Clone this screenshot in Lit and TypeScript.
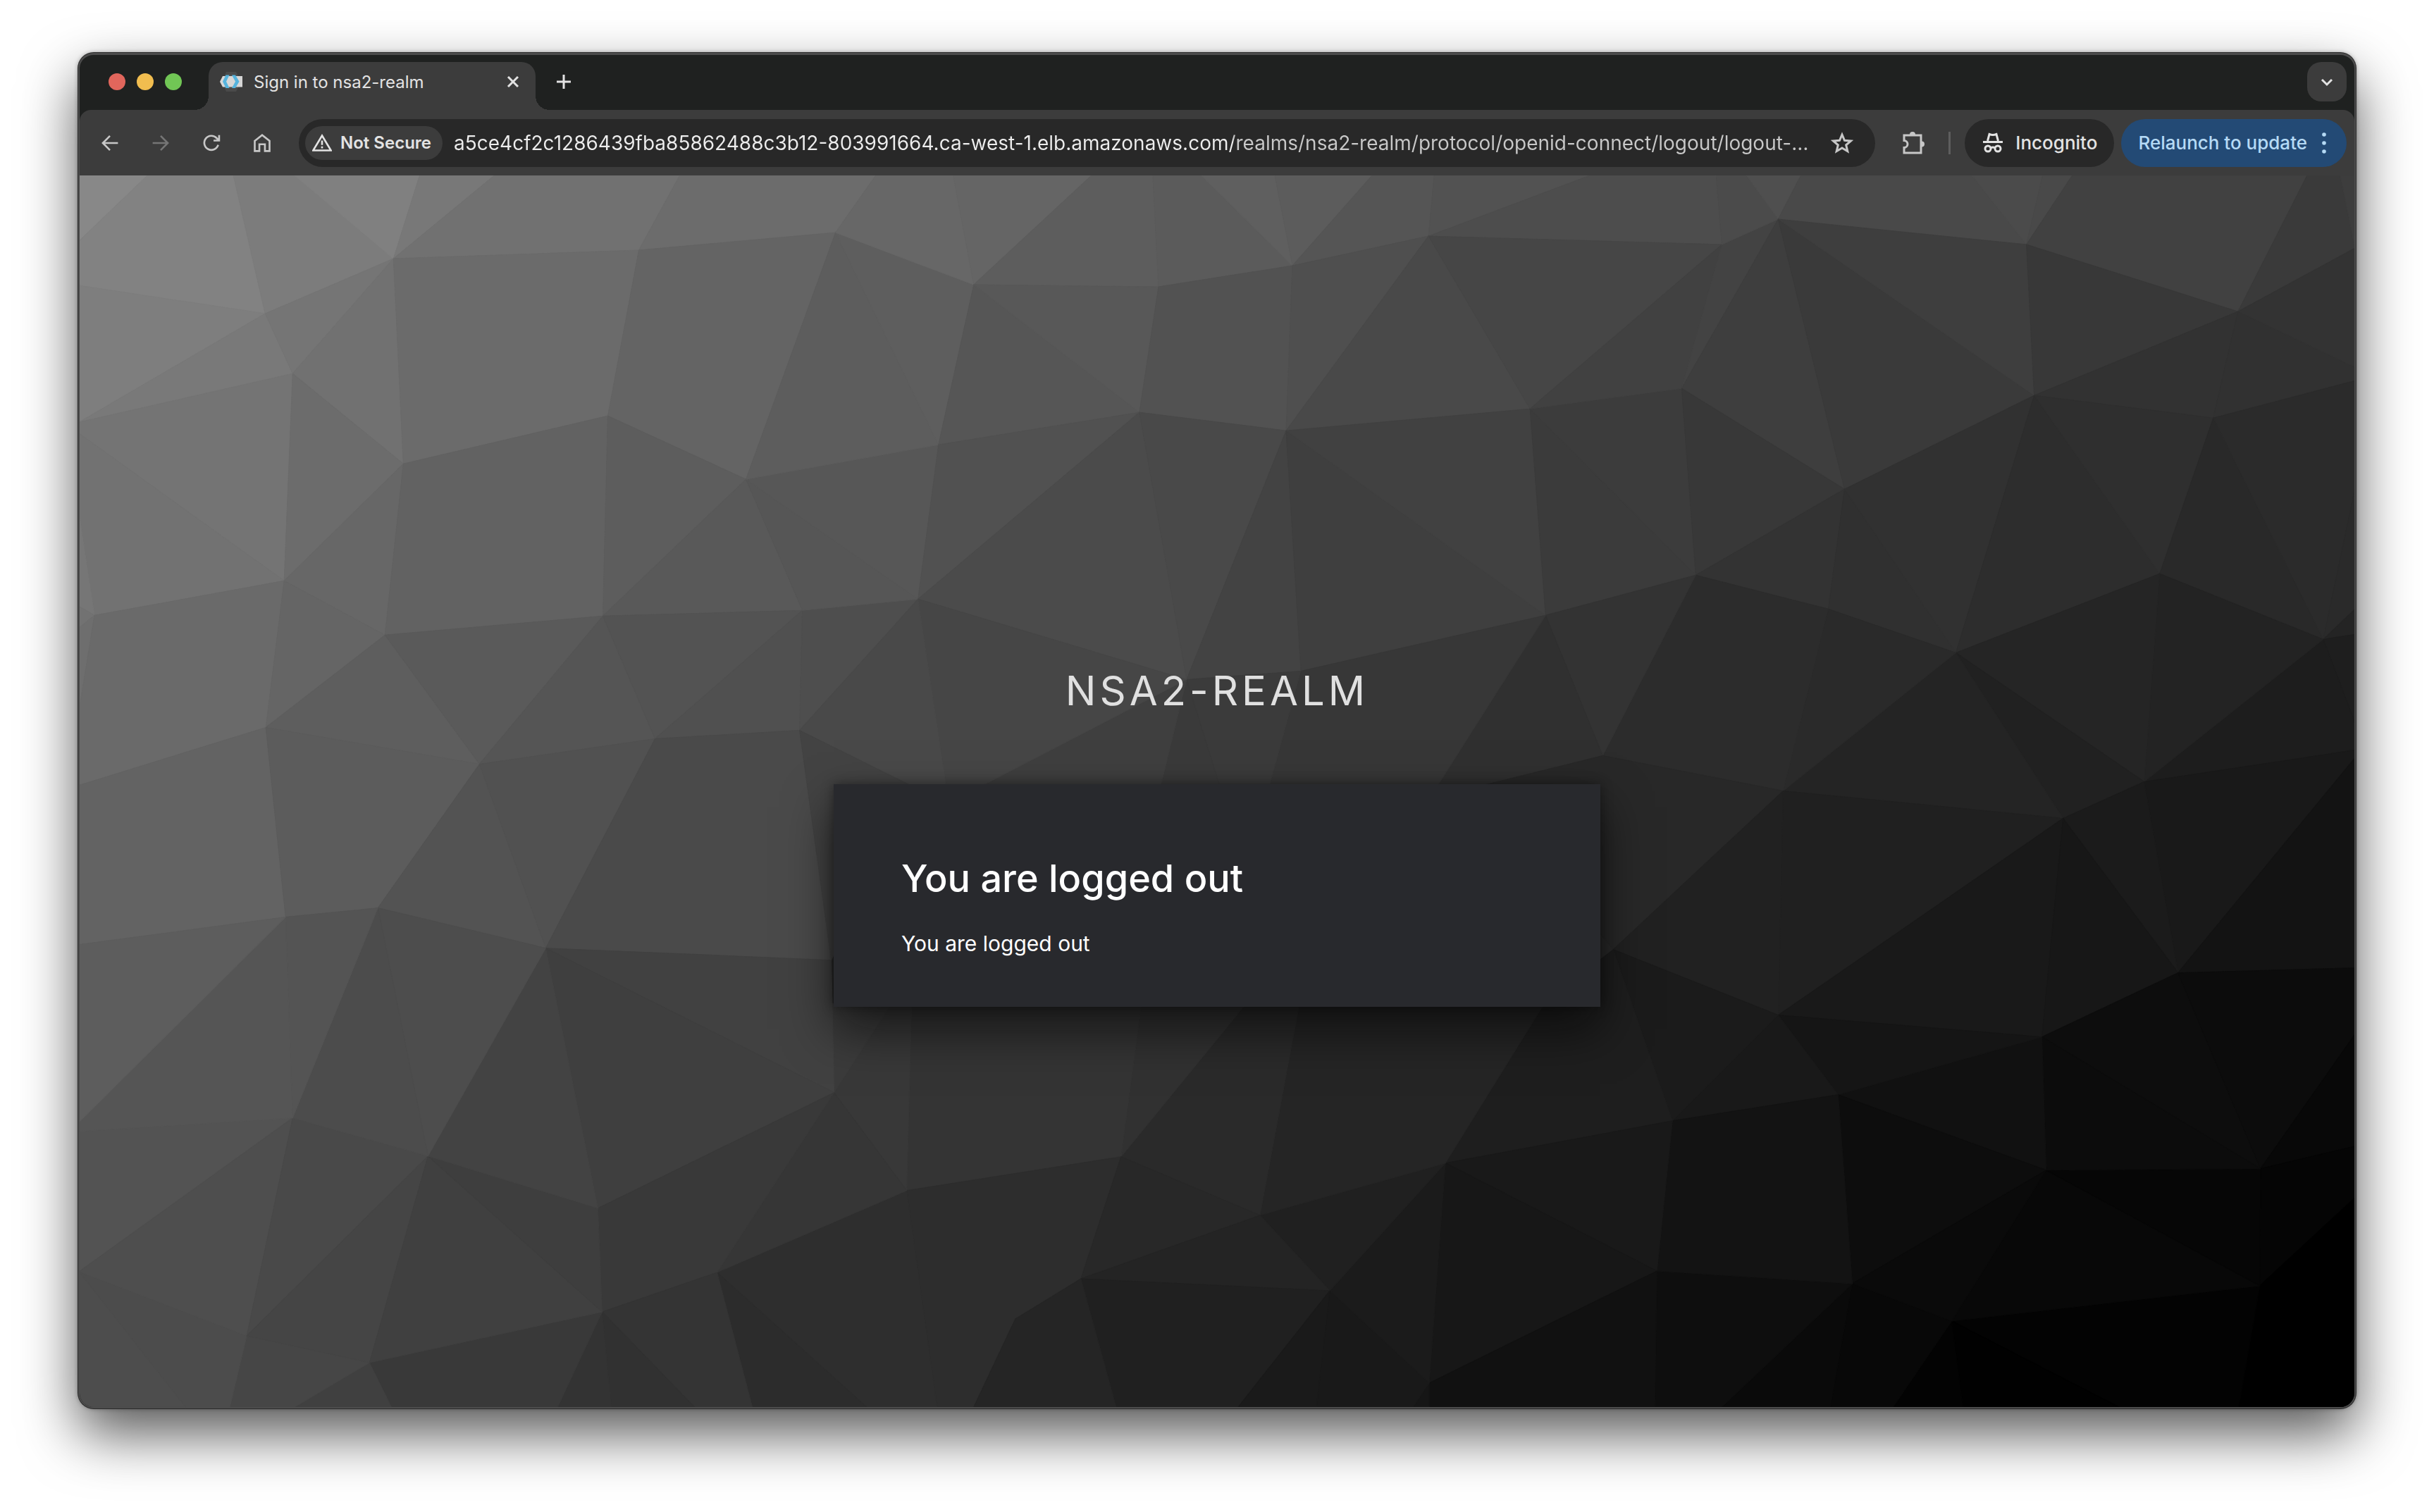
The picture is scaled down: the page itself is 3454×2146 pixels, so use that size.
import { LitElement, html, css, svg } from "lit";
import { customElement } from "lit/decorators.js";

/* Bounds of the low-poly backdrop's coordinate space. */
const LEFT = 113;
const TOP = 249;
const RIGHT = 3341;
const BOTTOM = 1996;

/* Named vertices of the backdrop mesh. */
const VERTICES: Record<string, string> = {
  A1: "377,445", A2: "559,367", A3: "416,530", A4: "573,658", A5: "907,355",
  A6: "863,590", A7: "1186,330", A8: "1059,680", A9: "135,873", A10: "404,824",
  A11: "547,901", A12: "378,1032", A13: "856,874", A14: "681,1084", A15: "930,1048",
  A16: "1139,866", A17: "1135,1036",
  B1: "1382,404", B2: "1644,407", B3: "1834,377", B4: "2027,335", B5: "1332,631",
  B6: "1617,585", B7: "1825,611", B8: "2171,580", B9: "1303,850", B10: "1684,964",
  B11: "1846,952", B12: "2193,873",
  C1: "2443,347", C2: "2523,311", C3: "2875,347", C4: "3175,442", C5: "2386,551",
  C6: "2617,694", C7: "2886,561", C8: "3140,593", C9: "2406,816", C10: "2594,864",
  C11: "2775,926", C12: "3064,814", C13: "3296,907", C14: "2274,1072", C15: "2530,1122",
  C16: "3042,1109",
  D1: "2927,1161", D2: "3090,1380", D3: "2289,1347", D4: "2523,1440", D5: "2897,1471",
  D6: "2608,1553", D7: "2373,1590", D8: "2903,1660", D9: "3207,1658", D10: "2351,1803",
  D11: "2628,1821", D12: "3206,1824", D13: "2769,1874",
  E1: "1184,1550", E2: "1287,1689", E3: "1591,1641", E4: "1788,1724", E5: "1534,1814",
  E6: "1441,1871", E7: "1887,1831", E8: "2051,1650", E9: "2028,1962",
  F1: "406,1301", F2: "537,1288", F3: "775,1345", F4: "416,1586", F5: "608,1640",
  F6: "849,1714", F8: "855,1861", F9: "1018,1805", F10: "351,1895", F11: "525,1933",
  G: "1180,1362",
};

/*
 * Facets as "grey level, then corners". A lower-case corner sits on a guide:
 * t/b = top/bottom edge, l/r = left/right edge, k/m = rows behind the card.
 */
const FACETS = `
88 t113 t210 l342|82 t210 t332 A1 l405 l342|7c t332 t419 A2 A1|80 t419 t596 A2|78 t596 t702 A2
71 t702 t965 A5 A2|6c t965 t1243 A7 A5|7e l405 A1 l599|79 A1 A3 l599|75 A1 A2 A3|71 A2 A4 A3
6b A2 A5 A6 A4|64 A5 A7 A8 A6|74 l599 A3 A10 l615|72 l615 A10 A9 l728|76 l728 A9 l860
72 l860 A9 l891|6e l891 A9 l1009|6a A9 A10 A12 l1114 l1009|6c A3 A4 A10|67 A4 A11 A10
65 A10 A11 A12|62 A4 A6 A13 A11|5d A6 A8 A13|59 A8 A16 A13|5e A11 A14 A12|5a A11 A13 A14
55 A13 A15 A14|53 A13 A16 A15|50 A15 A16 A17|63 l1114 A12 F1 l1340|5c A12 A14 F2 F1
53 A14 F3 F2|51 A14 A15 F3|4a A15 A17 G F3|4e A16 B9 A17|56 A8 B9 A16|57 A8 B5 B9
5d A7 B5 A8|5e A7 B1 B5|67 t1243 t1353 B1 A7|65 t1353 t1549 B1|5d t1549 t1636 B2 B1
5b t1636 t1705 B3 B2|5f t1705 t1809 B3|5c t1809 t1947 B3|55 t1947 t2035 B4 B3
52 t2035 t2256 B4|4d t2256 t2435 C1 B4|56 B1 B6 B5|58 B1 B2 B6|52 B2 B3 B7 B6|4f B3 B4 B7
49 B4 B8 B7|46 B4 C1 B8|51 B5 B6 B9|4b B6 B10 B9|49 B6 B7 B10|43 B7 B11 B10|3f B7 B12 B11
41 B7 B8 B12|3b B8 C9 B12|3c B8 C5 C9|41 B8 C1 C5|43 C1 C2 C5|4b t2435 t2478 C2 C1
4f t2478 t2555 C2|49 t2555 t2798 C3 C2|4b t2798 t2898 C3|49 t2898 t2940 C3
41 t2940 t3273 C4 C3|3a t3273 t3320 r352 C4|3d t3320 t3341 r352|3e C2 C6 C5|3a C2 C7 C6
3e C2 C3 C7|38 C3 C4 C7|32 C4 C8 C7|31 C4 r521 r540 C8|33 C4 r352 r521|38 C5 C6 C9
33 C6 C10 C9|30 C6 C11 C10|31 C6 C7 C11|2d C7 C12 C11|2f C7 C8 C12|29 C8 C13 C12
2b C8 r540 r693 C13|2a C13 r693 r864|24 C13 r864 r900|1e C13 r900 r1026
1d C13 r1026 r1064 C16|23 C12 C13 C16|25 C11 C12 C16|21 C11 C16 D1|24 C11 D1 C15
2a C10 C11 C15|2c C9 C10 C15 C14|33 B12 C9 C14|30 B12 C14 k2097 k2039
37 B11 B12 k2039 k1801|3b B10 B11 k1801 k1731|3a B10 k1731 k1647|3f B10 k1647 k1391
46 B9 B10 k1391 k1343|49 B9 k1343 k1296 A17|43 A17 k1296 G|28 C14 C15 D3 k2097
19 C16 r1064 r1075 D2|1b C16 D2 D1|13 r1075 r1373 D2|20 C15 D1 D4|21 C15 D4 D3
19 D1 D5 D4|17 D1 D2 D5|0d D2 D9 D5|0c D2 r1373 r1467 D9|08 D9 r1467 r1626
05 D9 r1626 r1699 D12|00 D12 r1699 r1918|00 D12 r1918 b3341 b3176|03 D12 b3176 b3006 D13
01 D13 b3006 b2785|03 D13 b2785 b2686|08 D13 b2686 b2597 D11|0a D11 b2597 b2443
0e D11 b2443 b2348 D10|08 D8 D12 D13|06 D8 D9 D12|0c D5 D9 D8|11 D5 D8 D6|15 D4 D5 D6
19 D4 D6 D7|1b D3 D4 D7|0d D6 D8 D11|0a D8 D13 D11|13 D6 D11 D10 D7|1e D3 D7 E8 m2191
19 E8 D7 D10|17 E8 D10 E9|11 E9 D10 b2348 b2028|16 E9 b2028 b2005|19 E7 E9 b2005 b1868
1b E7 E8 E9|20 E4 E8 E7|25 E4 m1844 m2191 E8|2a E3 m1768 m1844 E4|31 E3 m1620 m1768
34 E2 m1294 m1620 E3|38 E1 m1265 m1294 E2|3b E1 m1180 m1265|41 F3 G E1|3f F3 E1 F6
2d E2 E3 E5 E6 b1382 b1330|28 E3 E4 E5|24 E4 E7 E5|20 E5 E7 b1757 b1584
25 E5 b1584 b1382 E6|1a E7 b1868 b1757|2e E2 b1330 b1230 F9|2c F9 b1230 b1068
36 F9 E1 E2|39 F6 E1 F9 F8|34 F8 F9 b1068 b986|31 F8 b986 b868|33 F8 b868 b792
39 F8 b792 b556 F11|40 F11 b556 b419|46 F10 F11 b419 b327|4c l1804 F10 b327 b264
4d l1804 b264 b113|53 l1605 F4 l1804|4e l1804 F4 F10|49 F4 F5 F10|45 F5 F11 F10
40 F5 F8 F11|3e F5 F6 F8|43 F3 F6 F5|4d F2 F3 F5|4c F2 F5 F4|54 F1 F2 F4
55 F1 F4 l1605 l1592|5d l1340 F1 l1592`
  .trim()
  .split(/[|\n]/)
  .map((line) => line.trim().split(" "));

function corner(id: string): string {
  const n = id.slice(1);
  switch (id[0]) {
    case "t": return `${n},${TOP}`;
    case "b": return `${n},${BOTTOM}`;
    case "l": return `${LEFT},${n}`;
    case "r": return `${RIGHT},${n}`;
    case "k": return `${n},1116`;
    case "m": return `${n},1424`;
    default: return VERTICES[id];
  }
}

@customElement("poly-backdrop")
export class PolyBackdrop extends LitElement {
  static styles = css`
    :host {
      display: block;
      overflow: hidden;
      background: #2a2a2a;
    }
    .mesh {
      display: block;
      width: 100%;
      height: 100%;
    }
    .facet {
      stroke-width: 1;
      stroke-linejoin: round;
    }
  `;

  render() {
    return html`<svg
      class="mesh"
      viewBox="${LEFT} ${TOP} ${RIGHT - LEFT} ${BOTTOM - TOP}"
      preserveAspectRatio="xMidYMid slice"
      aria-hidden="true"
    >
      ${FACETS.map(([level, ...ids]) => {
        const tone = `#${level}${level}${level}`;
        return svg`<polygon class="facet" fill=${tone} stroke=${tone} points=${ids.map(corner).join(" ")}></polygon>`;
      })}
    </svg>`;
  }
}

const icons = {
  favicon: svg`<path d="M9 2H23L30 16L23 30H9L3 16Z" fill="#4a4a4a"/><path d="M4 8H32V23.500H4L0 16Z" fill="#d6d6d6"/><path d="M8.500 6.500H13.500L9 15.700L13.500 25H8.500L4 15.700Z" fill="#55b3dd"/><path d="M17 6.500H22L27.500 15.700L22 25H17L22 15.700Z" fill="#55b3dd"/>`,
  close: svg`<path d="M9 9L23 23M23 9L9 23"/>`,
  plus: svg`<path d="M16 6V26M6 16H26"/>`,
  chevron: svg`<path d="M9 13L16 20L23 13"/>`,
  back: svg`<path d="M29 16H5M16 4.500L4.500 16L16 27.500"/>`,
  forward: svg`<path d="M3 16H27M16 4.500L27.500 16L16 27.500"/>`,
  reload: svg`<path d="M27 19A11.500 11.500 0 1 1 24.500 8L28 11.500M28.500 3V12H19.500"/>`,
  home: svg`<path d="M4 12.500L16 3L28 12.500V29H20.500V18H11.500V29H4Z"/>`,
  warning: svg`<path d="M16 4L30.500 28H1.500Z"/><path d="M16 12V19M16 21.500V24.500"/>`,
  star: svg`<path d="M16 4L19.500 12.300L28.500 13L21.700 18.900L23.800 27.700L16 23L8.200 27.700L10.300 18.900L3.500 13L12.500 12.300Z"/>`,
  puzzle: svg`<path d="M3 5H27V30H3V22.500A5 5 0 0 0 3 12.500Z"/><path class="solid" d="M11 4A4 4 0 0 1 19 4ZM28 13.500A4 4 0 0 1 28 21.500Z"/>`,
  incognito: svg`<path d="M8.500 13L11 3.500Q16 5.500 21 3.500L23.500 13M2 14.500H30"/><circle cx="9" cy="24" r="4"/><circle cx="23" cy="24" r="4"/><path d="M13 23Q16 21 19 23"/>`,
  dots: svg`<g class="solid"><circle cx="16" cy="4" r="2.800"/><circle cx="16" cy="16" r="2.800"/><circle cx="16" cy="28" r="2.800"/></g>`,
};

const icon = (name: keyof typeof icons) =>
  html`<svg class="icon ${name}" viewBox="0 0 32 32" aria-hidden="true">${icons[name]}</svg>`;

const HOST = "a5ce4cf2c1286439fba85862488c3b12-803991664.ca-west-1.elb.amazonaws.com";
const PATH = "/realms/nsa2-realm/protocol/openid-connect/logout/logout-…";

@customElement("app-root")
export class AppRoot extends LitElement {
  static styles = css`
    :host {
      display: flex;
      box-sizing: border-box;
      min-height: 100vh;
      padding: 75px 111px 147px;
      background: #fff;
      color: #e3e3e3;
      font-family: Inter, "Liberation Sans", sans-serif;
      font-size: 24px;
    }
    button {
      display: flex;
      align-items: center;
      justify-content: center;
      margin: 0;
      padding: 0;
      border: 0;
      background: none;
      color: inherit;
      font: inherit;
      white-space: nowrap;
    }
    .window {
      display: flex;
      flex: 1;
      flex-direction: column;
      min-width: 0;
      overflow: hidden;
      border: 2px solid #4c4c4c;
      border-top-width: 3px;
      border-radius: 22px;
      background: #1f2120;
      box-shadow: 0 0 0 1px #2c2c2c, 0 0 6px rgba(0, 0, 0, 0.4), 0 36px 80px rgba(0, 0, 0, 0.66);
    }

    .strip {
      display: flex;
      align-items: flex-end;
      height: 78px;
      padding: 0 11px 0 41px;
    }
    .lights {
      display: flex;
      gap: 16px;
      padding-bottom: 28px;
    }
    .light {
      width: 24px;
      height: 24px;
      border-radius: 50%;
    }
    .red { background: #e1665c; }
    .amber { background: #f1bd4f; }
    .green { background: #71c655; }
    .flare {
      width: 20px;
      height: 20px;
    }
    .flare.start {
      margin-left: 18px;
      background: radial-gradient(circle at 0 0, transparent 20px, #3c3c3c 20px);
    }
    .flare.end {
      background: radial-gradient(circle at 100% 0, transparent 20px, #3c3c3c 20px);
    }
    .tab {
      display: flex;
      align-items: center;
      box-sizing: border-box;
      width: 464px;
      height: 68px;
      padding: 0 16px 12px;
      border-radius: 20px 20px 0 0;
      background: #3c3c3c;
    }
    .tab-name {
      flex: 1;
      justify-content: flex-start;
      gap: 16px;
    }
    .add {
      width: 40px;
      height: 56px;
      margin-bottom: 12px;
    }
    .search {
      width: 56px;
      height: 56px;
      margin: 0 0 12px auto;
      border-radius: 20px;
      background: #3c3c3c;
    }

    .toolbar {
      display: flex;
      align-items: center;
      height: 93px;
      padding: 0 11px 0 15px;
      border-radius: 16px 16px 0 0;
      background: #3c3c3c;
      color: #c7c7c7;
    }
    .nav {
      display: flex;
      gap: 16px;
      margin-right: 24px;
    }
    .tool {
      width: 56px;
      height: 56px;
    }
    .tool:disabled {
      color: #757575;
    }
    .address {
      display: flex;
      flex: 1;
      align-items: center;
      box-sizing: border-box;
      min-width: 0;
      height: 68px;
      padding: 0 31px 0 9px;
      border-radius: 34px;
      background: #282828;
    }
    .chip {
      flex: none;
      gap: 12px;
      height: 48px;
      padding: 0 16px 0 10px;
      border-radius: 24px;
      background: #3c3c3c;
      color: #e3e3e3;
      font-weight: 600;
    }
    .url {
      flex: 1;
      min-width: 0;
      height: 48px;
      margin: 0 16px;
      padding: 0;
      border: 0;
      outline: 0;
      background: linear-gradient(90deg, #ededed 1106px, #c8c8c8 1106px);
      background-clip: text;
      -webkit-background-clip: text;
      color: transparent;
      font: inherit;
      font-size: 28px;
      text-overflow: ellipsis;
    }
    .extensions {
      margin-left: 26px;
    }
    .rule {
      width: 3px;
      height: 32px;
      margin: 0 20px 0 22px;
      background: #5e5e5e;
    }
    .pill {
      gap: 16px;
      height: 68px;
      padding: 0 24px;
      border-radius: 34px;
      background: #282828;
      color: #e3e3e3;
      font-size: 26px;
      font-weight: 500;
    }
    .update {
      gap: 8px;
      margin-left: 10px;
      padding: 0 16px 0 24px;
      background: #234a75;
      color: #b5daf5;
    }

    .icon {
      width: 32px;
      height: 32px;
      fill: none;
      stroke: currentColor;
      stroke-width: 3;
    }
    .icon .solid {
      fill: currentColor;
      stroke: none;
    }
    .favicon { stroke: none; }
    .back, .forward, .reload, .home, .warning { width: 28px; height: 28px; }

    .page {
      position: relative;
      display: flex;
      flex: 1;
      flex-direction: column;
      align-items: center;
      padding: 696px 24px 96px;
    }
    .backdrop {
      position: absolute;
      inset: 0;
    }
    .realm {
      position: relative;
      margin: 0;
      color: #e0e0e0;
      font-size: 58px;
      font-weight: 400;
      letter-spacing: 5px;
      line-height: 70px;
      text-transform: uppercase;
    }
    .card {
      position: relative;
      box-sizing: border-box;
      width: 100%;
      max-width: 1088px;
      margin-top: 98px;
      padding: 98px 96px 66px;
      background: #28292d;
      box-shadow: 0 32px 64px rgba(3, 3, 3, 0.6), 0 0 16px rgba(3, 3, 3, 0.4);
      color: #fff;
    }
    .headline {
      margin: 0 0 32px;
      font-size: 54px;
      font-weight: 500;
      line-height: 72px;
    }
    .message {
      margin: 0;
      font-size: 30px;
      line-height: 48px;
    }
  `;

  render() {
    return html`
      <main class="window">
        <header class="strip">
          <div class="lights">
            <button class="light red" aria-label="Close window"></button>
            <button class="light amber" aria-label="Minimize window"></button>
            <button class="light green" aria-label="Zoom window"></button>
          </div>
          <span class="flare start"></span>
          <div class="tab">
            <button class="tab-name">${icon("favicon")}<span>Sign in to nsa2-realm</span></button>
            <button aria-label="Close tab">${icon("close")}</button>
          </div>
          <span class="flare end"></span>
          <button class="add" aria-label="New tab">${icon("plus")}</button>
          <button class="search" aria-label="Search tabs">${icon("chevron")}</button>
        </header>
        <nav class="toolbar">
          <div class="nav">
            <button class="tool" aria-label="Back">${icon("back")}</button>
            <button class="tool" aria-label="Forward" disabled>${icon("forward")}</button>
            <button class="tool" aria-label="Reload">${icon("reload")}</button>
            <button class="tool" aria-label="Home">${icon("home")}</button>
          </div>
          <div class="address">
            <button class="chip">${icon("warning")}<span>Not Secure</span></button>
            <input class="url" type="text" aria-label="Address" .value=${HOST + PATH} />
            <button aria-label="Bookmark this page">${icon("star")}</button>
          </div>
          <button class="tool extensions" aria-label="Extensions">${icon("puzzle")}</button>
          <span class="rule"></span>
          <button class="pill">${icon("incognito")}<span>Incognito</span></button>
          <button class="pill update"><span>Relaunch to update</span>${icon("dots")}</button>
        </nav>
        <section class="page">
          <poly-backdrop class="backdrop"></poly-backdrop>
          <h1 class="realm">nsa2-realm</h1>
          <article class="card">
            <h2 class="headline">You are logged out</h2>
            <p class="message">You are logged out</p>
          </article>
        </section>
      </main>
    `;
  }
}
